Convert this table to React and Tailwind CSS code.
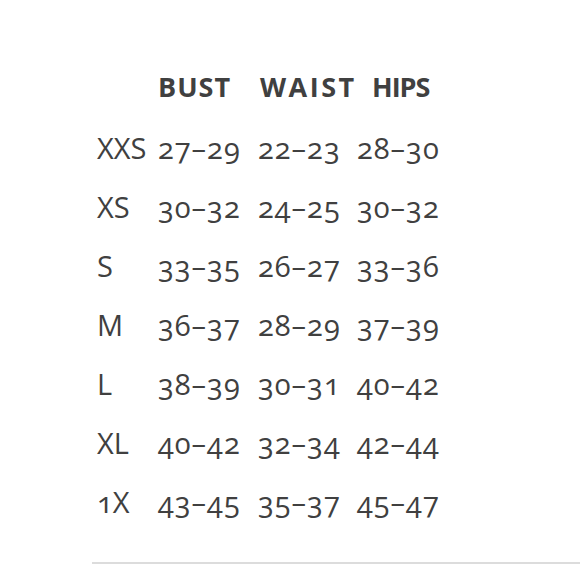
import React from "react";

const rows = [
  ["XXS", "27–29", "22–23", "28–30"],
  ["XS", "30–32", "24–25", "30–32"],
  ["S", "33–35", "26–27", "33–36"],
  ["M", "36–37", "28–29", "37–39"],
  ["L", "38–39", "30–31", "40–42"],
  ["XL", "40–42", "32–34", "42–44"],
  ["1X", "43–45", "35–37", "45–47"],
];

export default function App() {
  return (
    <div
      className="w-[580px] h-[580px] bg-white text-[#404040] overflow-hidden oldstyle-nums"
      style={{ fontFamily: '"Open Sans", "Noto Sans", sans-serif' }}
    >
      {/* Header */}
      <div className="pt-[67px] pl-[158px] grid grid-cols-[102px_112px_auto] h-[107px] text-[27px] leading-[40px] font-bold">
        <span className="tracking-[1px]">BUST</span>
        <span className="tracking-[2.5px]">WAIST</span>
        <span className="tracking-[-1px]">HIPS</span>
      </div>

      {/* Size rows */}
      <div className="mt-[11px] pl-[97px] grid grid-cols-[61px_100px_99px_auto] text-[29px] leading-[59px] tracking-[1px]">
        {rows.map((r) => (
          <React.Fragment key={r[0]}>
            <span className="tracking-[0px]">{r[0]}</span>
            <span>{r[1]}</span>
            <span>{r[2]}</span>
            <span>{r[3]}</span>
          </React.Fragment>
        ))}
      </div>

      <div className="mt-[31px] ml-[92px] h-[2px] bg-[#dcdcdc]" />
    </div>
  );
}
